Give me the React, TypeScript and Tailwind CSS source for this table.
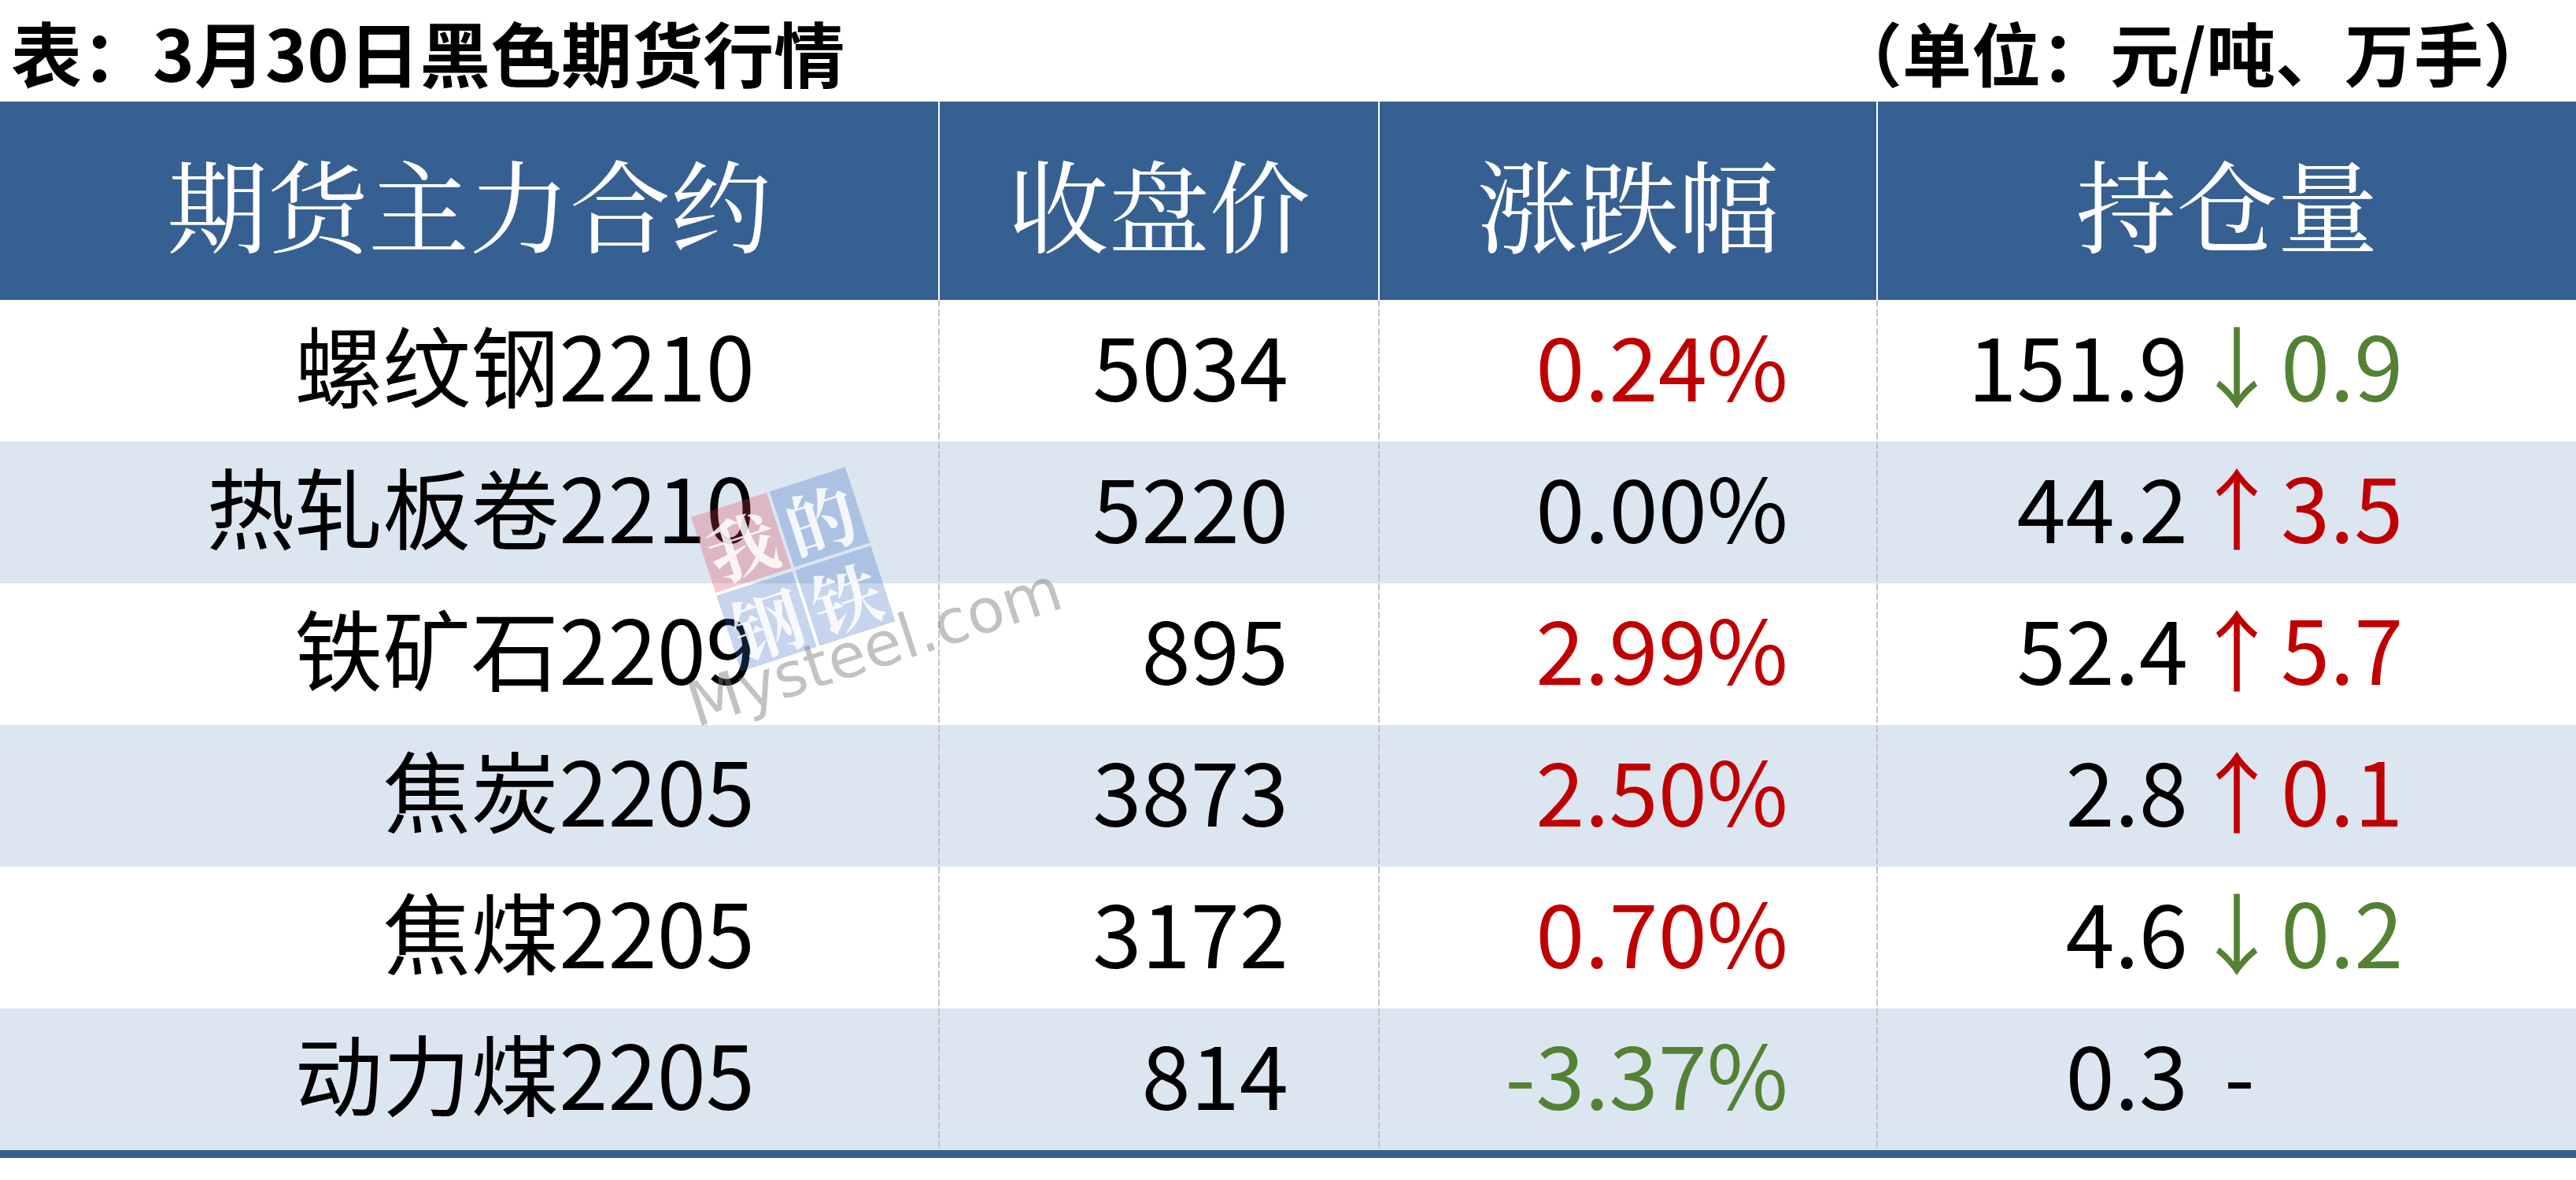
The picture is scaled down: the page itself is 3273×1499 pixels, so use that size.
import React from "react";

type Row = {
  name: string;
  price: string;
  pct: string;
  pctTone: "red" | "green" | "black";
  oi: string;
  chg: string;
  chgTone: "red" | "green" | "black";
};

const rows: Row[] = [
  { name: "螺纹钢2210", price: "5034", pct: "0.24%", pctTone: "red", oi: "151.9", chg: "↓0.9", chgTone: "green" },
  { name: "热轧板卷2210", price: "5220", pct: "0.00%", pctTone: "black", oi: "44.2", chg: "↑3.5", chgTone: "red" },
  { name: "铁矿石2209", price: "895", pct: "2.99%", pctTone: "red", oi: "52.4", chg: "↑5.7", chgTone: "red" },
  { name: "焦炭2205", price: "3873", pct: "2.50%", pctTone: "red", oi: "2.8", chg: "↑0.1", chgTone: "red" },
  { name: "焦煤2205", price: "3172", pct: "0.70%", pctTone: "red", oi: "4.6", chg: "↓0.2", chgTone: "green" },
  { name: "动力煤2205", price: "814", pct: "-3.37%", pctTone: "green", oi: "0.3", chg: "-", chgTone: "black" },
];

const tone = {
  red: "text-[#c00000]",
  green: "text-[#548235]",
  black: "text-black",
};

function DashSep() {
  return (
    <div className="w-[2px] shrink-0 self-stretch bg-[repeating-linear-gradient(to_bottom,#c4c4c4_0px,#c4c4c4_9px,transparent_9px,transparent_12px)]" />
  );
}

function HeadSep() {
  return <div className="w-[2px] shrink-0 self-stretch bg-white" />;
}

function Watermark() {
  return (
    <div className="pointer-events-none absolute left-[878px] top-[657px] origin-top-left -rotate-[18deg]">
      <div className="grid w-[206px] grid-cols-2 gap-[4px] font-['Noto_Serif_CJK_SC','Noto_Sans_CJK_SC',serif] font-bold">
        <div className="flex h-[101px] items-center justify-center bg-[rgba(226,60,80,0.28)] text-[88px] leading-none text-[rgba(255,255,255,0.85)]">
          我
        </div>
        <div className="flex h-[101px] items-center justify-center bg-[rgba(50,100,190,0.28)] text-[88px] leading-none text-[rgba(255,255,255,0.85)]">
          的
        </div>
        <div className="flex h-[101px] items-center justify-center bg-[rgba(50,100,190,0.28)] text-[88px] leading-none text-[rgba(255,255,255,0.85)]">
          钢
        </div>
        <div className="flex h-[101px] items-center justify-center bg-[rgba(50,100,190,0.28)] text-[88px] leading-none text-[rgba(255,255,255,0.85)]">
          铁
        </div>
      </div>
      <div className="absolute left-[-76px] top-[190px] whitespace-nowrap font-['DejaVu_Sans',sans-serif] text-[78px] leading-none text-[rgba(120,120,120,0.45)]">
        Mysteel.com
      </div>
    </div>
  );
}

export default function App() {
  return (
    <div className="relative h-[1499px] w-[3273px] overflow-hidden bg-white font-['Noto_Sans_CJK_SC',sans-serif] text-black">
      {/* title row */}
      <div className="flex h-[129px] items-center justify-between pl-[14px] pr-[30px]">
        <div className="text-[90px] font-bold leading-none">表：3月30日黑色期货行情</div>
        <div className="text-[88px] font-bold leading-none">（单位：元/吨、万手）</div>
      </div>

      {/* header */}
      <div className="flex h-[252px] bg-[#376092] font-['Noto_Serif_CJK_SC','Noto_Sans_CJK_SC',serif] text-[128px] leading-none text-white">
        <div className="flex w-[1192px] shrink-0 items-center justify-center pt-[4px]">期货主力合约</div>
        <HeadSep />
        <div className="flex w-[557px] shrink-0 items-center justify-center pt-[4px]">收盘价</div>
        <HeadSep />
        <div className="flex w-[631px] shrink-0 items-center justify-center pt-[4px]">涨跌幅</div>
        <HeadSep />
        <div className="flex flex-1 items-center justify-center pt-[4px]">持仓量</div>
      </div>

      {/* body */}
      <div className="flex flex-col text-[112px] leading-none">
        {rows.map((r, i) => (
          <div key={r.name} className={i % 2 === 1 ? "flex h-[180px] bg-[#dce6f1]" : "flex h-[180px] bg-white"}>
            <div className="flex w-[1192px] shrink-0 items-center justify-end pb-[20px] pr-[233px]">{r.name}</div>
            <DashSep />
            <div className="flex w-[557px] shrink-0 items-center justify-end pb-[20px] pr-[114px]">{r.price}</div>
            <DashSep />
            <div className={"flex w-[631px] shrink-0 items-center justify-end pb-[20px] pr-[112px] " + tone[r.pctTone]}>
              {r.pct}
            </div>
            <DashSep />
            <div className="flex flex-1 items-center pb-[20px]">
              <div className="w-[394px] shrink-0 text-right">{r.oi}</div>
              <div className={r.chg === "-" ? "ml-[46px] " + tone[r.chgTone] : "ml-[6px] " + tone[r.chgTone]}>{r.chg}</div>
            </div>
          </div>
        ))}
      </div>
      <div className="h-[10px] bg-[#376092]" />

      <Watermark />
    </div>
  );
}
